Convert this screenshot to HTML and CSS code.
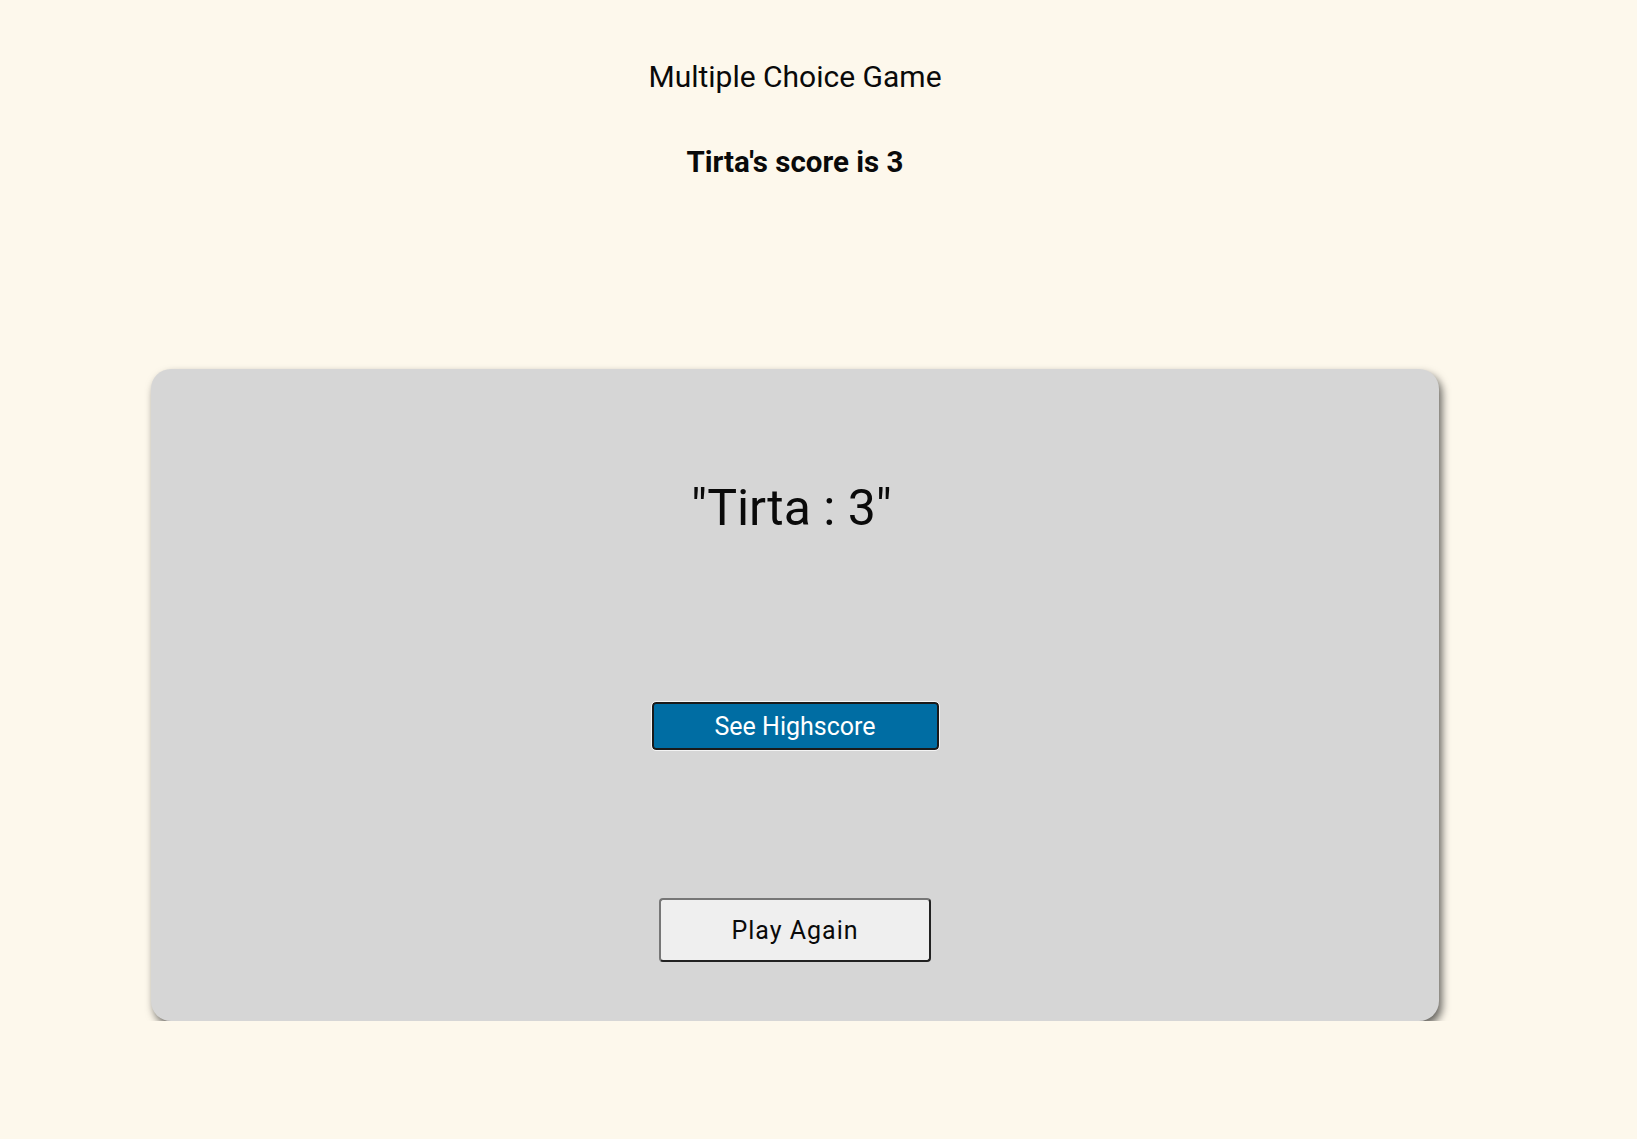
FILE: index.html
```html
<!DOCTYPE html>
<html lang="en">
<head>
<meta charset="utf-8">
<title>Multiple Choice Game</title>
<link rel="stylesheet" href="styles.css">
</head>
<body>
<div class="page">
  <header class="header">
    <h1 class="title">Multiple Choice Game</h1>
    <h2 class="score">Tirta's score is 3</h2>
  </header>
  <main class="card">
    <p class="result">"Tirta : 3"</p>
    <button class="btn-high" type="button">See Highscore</button>
    <button class="btn-again" type="button">Play Again</button>
  </main>
</div>
</body>
</html>
```
FILE: styles.css
```css
html, body {
  margin: 0;
  padding: 0;
  background: #fdf8ec;
  font-family: Roboto, "Liberation Sans", sans-serif;
  color: #0a0a0a;
}
.page {
  width: 1590px;
  display: flex;
  flex-direction: column;
  align-items: center;
}
.header {
  display: flex;
  flex-direction: column;
  align-items: center;
  padding-top: 59px;
}
.title {
  margin: 0;
  font-size: 30px;
  font-weight: 400;
  line-height: 35px;
}
.score {
  margin: 51px 0 0;
  font-size: 29.5px;
  font-weight: 700;
  line-height: 35px;
}
.card {
  margin-top: 189px;
  width: 1288px;
  height: 652px;
  box-sizing: border-box;
  background: #d6d6d6;
  border-radius: 20px;
  box-shadow: 3px 5px 8px rgba(0, 0, 0, 0.6);
  display: flex;
  flex-direction: column;
  align-items: center;
  padding-top: 110px;
}
.result {
  margin: 0;
  padding-right: 7px;
  font-size: 50px;
  line-height: 58px;
  font-weight: 400;
}
.btn-high {
  margin-top: 165px;
  width: 287px;
  height: 48px;
  background: #006da3;
  color: #fff;
  border: 2px solid #1a1a1a;
  border-radius: 4px;
  outline: 1px solid #f4f4f4;
  font-family: Roboto, "Liberation Sans", sans-serif;
  font-size: 25px;
  cursor: pointer;
}
.btn-again {
  margin-top: 148px;
  width: 272px;
  height: 64px;
  background: #efefef;
  color: #0a0a0a;
  border: 2px solid;
  border-color: #777 #222 #222 #777;
  border-radius: 4px;
  font-family: Roboto, "Liberation Sans", sans-serif;
  font-size: 25px;
  letter-spacing: 1px;
  cursor: pointer;
}
```
